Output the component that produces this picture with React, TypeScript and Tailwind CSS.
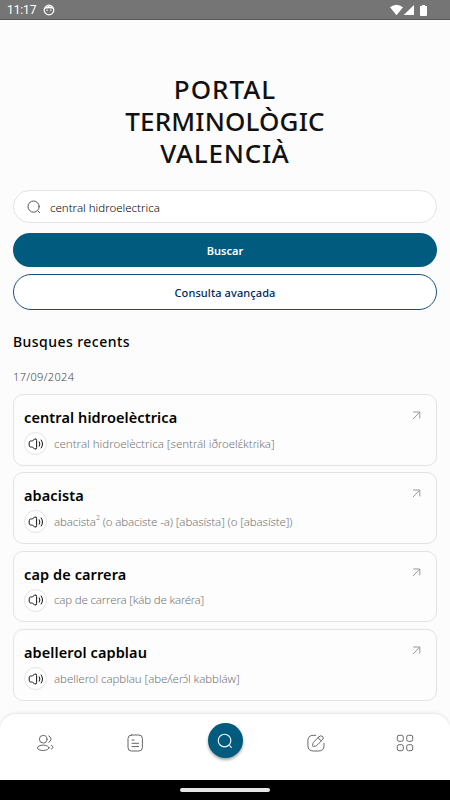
import type { ReactNode } from "react";

interface Term {
  title: string;
  text: ReactNode;
  textSpacing: string;
}

const terms: Term[] = [
  {
    title: "central hidroelèctrica",
    text: "central hidroelèctrica [sentɾál iðɾoelɛ́ktɾika]",
    textSpacing: "tracking-[0px]",
  },
  {
    title: "abacista",
    text: (
      <>
        abacista<sup className="top-[-6px] text-[7px]">2</sup> (o abaciste -a) [abasísta] (o [abasíste])
      </>
    ),
    textSpacing: "tracking-[-0.12px]",
  },
  {
    title: "cap de carrera",
    text: "cap de carrera [káb de kaɾéɾa]",
    textSpacing: "tracking-[-0.18px]",
  },
  {
    title: "abellerol capblau",
    text: "abellerol capblau [abeʎeɾɔ́l kabbláw]",
    textSpacing: "tracking-[-0.08px]",
  },
];

function SearchIcon({ className }: { className: string }) {
  return (
    <svg viewBox="0 0 16 16" fill="none" stroke="currentColor" strokeLinecap="round" className={className}>
      <circle cx="7.6" cy="7.6" r="5.6" />
      <path d="M12.2 12.2 13.6 13.6" />
    </svg>
  );
}

function SpeakerIcon() {
  return (
    <svg viewBox="0 0 16 14" fill="none" stroke="currentColor" strokeWidth="1" strokeLinecap="round" strokeLinejoin="round" className="h-3.5 w-4">
      <path d="M1.2 5.4Q1.2 4.2 2.4 4H3.6Q4.2 4 4.8 3.6L6.4 2.3Q8.6 1 8.6 3.4V10.6Q8.6 13 6.4 11.7L4.8 10.4Q4.2 10 3.6 10H2.4Q1.2 9.8 1.2 8.6Z" />
      <path d="M11.3 4.8Q12.6 7 11.3 9.2M13.2 3Q16 7 13.2 11" />
    </svg>
  );
}

function StatusBar() {
  return (
    <div className="flex h-5 items-center justify-between border-b border-[#5c5658] bg-[#757575] pr-[22px] pl-[7px] text-white">
      <div className="flex items-center gap-[7px]">
        <span className="pt-px font-['Roboto',sans-serif] text-[12px] leading-[18px] tracking-[-0.1px]">11:17</span>
        <svg viewBox="0 0 12 12" className="size-3">
          <circle cx="6" cy="6" r="4.8" fill="none" stroke="white" strokeWidth="1.2" />
          <path d="M1.5 4.8A5 5 0 0 1 10.5 4.8Q6 3.6 1.5 4.8Z" fill="white" />
          <path d="M3.4 6.2H5M7 6.2H8.6" stroke="white" strokeWidth="0.9" />
        </svg>
      </div>
      <svg viewBox="0 0 38 12" fill="white" className="h-3 w-[38px]">
        <path d="M0 3.3Q6.5-1.8 13 3.3L6.5 11.2Z" />
        <path d="M24 1V11H13.7Z" />
        <path d="M30 2H32V1H35V2H37V11Q37 12 36 12H31Q30 12 30 11Z" />
      </svg>
    </div>
  );
}

function TermCard({ term }: { term: Term }) {
  return (
    <div className="h-[71.5px] rounded-[10px] border border-[#e3e3e3] bg-[#fdfdfd] pt-3 pr-[15px] pl-2.5">
      <div className="flex h-5 items-start justify-between">
        <h3 className="text-[14.5px] leading-5 font-semibold tracking-[0.1px] whitespace-nowrap text-black">{term.title}</h3>
        <svg viewBox="0 0 9 9" fill="none" stroke="#999" strokeWidth="1" className="mt-1 size-[9px]">
          <path d="M1 8 7.6 1.2M1.2 1H7.8V7.4" />
        </svg>
      </div>
      <div className="mt-[5px] flex items-center gap-[7px]">
        <div className="flex size-[23px] shrink-0 items-center justify-center rounded-full border border-[#e3e3e3] bg-white text-[#111]">
          <SpeakerIcon />
        </div>
        <p className={`text-[11.5px] leading-5 font-light whitespace-nowrap text-[#757575] ${term.textSpacing}`}>{term.text}</p>
      </div>
    </div>
  );
}

function BottomNav() {
  return (
    <nav className="grid h-[66px] shrink-0 grid-cols-5 justify-items-center rounded-t-2xl bg-white text-[#666] shadow-[0_-1px_3px_rgba(0,0,0,0.1)]">
      <svg viewBox="0 0 18 18" fill="none" stroke="currentColor" strokeLinecap="round" className="mt-5 size-[18px]">
        <circle cx="7.2" cy="5.2" r="3.8" />
        <ellipse cx="7.2" cy="13.8" rx="5.8" ry="2.7" />
        <path d="M12.8 1.9Q15 2.9 15 5.2Q15 7.5 12.8 8.3M15.3 11.4Q17 12.1 17 13.2Q17 14.3 15.3 15" />
      </svg>
      <svg viewBox="0 0 18 18" fill="none" stroke="currentColor" strokeLinecap="round" className="mt-5 size-[18px]">
        <rect x="2" y="1" width="14.4" height="16" rx="3.5" />
        <path d="M6 6H8M6 9.3H12.6M6 12.6H12.6" />
      </svg>
      <div className="mt-[9px] flex size-[35px] items-center justify-center rounded-full bg-[#005b7f] text-white shadow-[0_2px_3px_rgba(0,0,0,0.35)]">
        <SearchIcon className="size-[18px]" />
      </div>
      <svg viewBox="0 0 18 18" fill="none" stroke="currentColor" strokeLinecap="round" strokeLinejoin="round" className="mt-5 ml-px size-[18px]">
        <path d="M8.7 1.3H6.5Q.9 1.3.9 6.8V11.5Q.9 17 6.5 17H11.4Q17 17 17 11.5V9.3" />
        <path d="M12 2.7 6.6 8.2Q6 8.8 5.9 9.6L5.6 11.5Q5.4 12.6 6.5 12.4L8.4 12.1Q9.2 12 9.8 11.4L15.3 6Q17.2 4.1 15.6 2.5Q13.9.8 12 2.7ZM11.2 3.6Q11.8 6.1 14.4 6.8" />
      </svg>
      <svg viewBox="0 0 18 18" fill="none" stroke="currentColor" className="mt-5 size-[18px]">
        <rect x="1.3" y="1.3" width="6" height="6" rx="1.8" />
        <rect x="10.7" y="1.3" width="6" height="6" rx="1.8" />
        <rect x="1.3" y="10.7" width="6" height="6" rx="1.8" />
        <rect x="10.7" y="10.7" width="6" height="6" rx="1.8" />
      </svg>
    </nav>
  );
}

export default function App() {
  return (
    <div className="flex h-[800px] w-[450px] flex-col overflow-hidden bg-[#fcfcfc] font-['Noto_Sans','DejaVu_Sans',sans-serif]">
      <StatusBar />

      <main className="flex h-[694px] shrink-0 flex-col px-[13px]">
        {/* Title */}
        <h1 className="mt-[53px] flex flex-col text-center text-[26px] leading-8 font-medium text-[#111]">
          <span className="tracking-[1px]">PORTAL</span>
          <span className="tracking-[0.15px]">TERMINOLÒGIC</span>
          <span className="tracking-[0.75px]">VALENCIÀ</span>
        </h1>

        {/* Search form */}
        <div className="mt-[21px] flex h-[33px] shrink-0 items-center gap-2 rounded-full border border-[#e4e4e4] bg-white pl-3">
          <SearchIcon className="size-4 text-[#555]" />
          <span className="pt-0.5 text-[11.5px] font-light text-black">central hidroelectrica</span>
        </div>
        <button className="mt-2.5 h-[34px] shrink-0 rounded-full bg-[#005b7f] pt-0.5 text-[11px] font-semibold text-white">Buscar</button>
        <button className="mt-[7px] h-9 shrink-0 rounded-full border border-[#1a4f7a] bg-white pt-0.5 text-[11px] font-medium tracking-[0.1px] text-[#002a5c]">
          Consulta avançada
        </button>

        {/* Recent searches */}
        <h2 className="mt-[22px] text-[14px] leading-5 font-medium tracking-[0.45px] text-black">Busques recents</h2>
        <p className="mt-4 text-[11px] leading-[18px] font-light tracking-[0.35px] text-[#444]">17/09/2024</p>
        <div className="mt-2 flex flex-col gap-[6.9px]">
          {terms.map((term) => (
            <TermCard key={term.title} term={term} />
          ))}
        </div>
      </main>

      <BottomNav />

      {/* System navigation */}
      <div className="flex h-5 shrink-0 items-center justify-center bg-black">
        <div className="h-1 w-[90px] rounded-full bg-[#e6e6e6]" />
      </div>
    </div>
  );
}
